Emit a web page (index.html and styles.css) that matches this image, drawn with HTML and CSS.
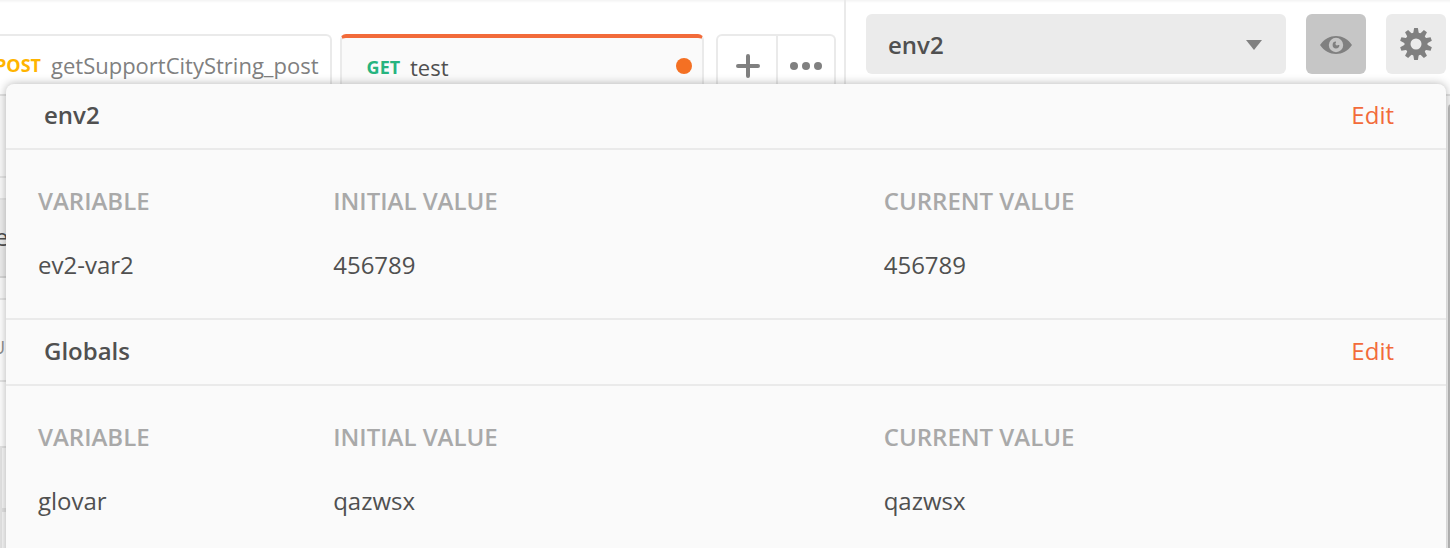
FILE: index.html
```
<!DOCTYPE html>
<html lang="en">
<head>
<meta charset="utf-8">
<title>Environment quick look</title>
<link rel="stylesheet" href="styles.css">
</head>
<body>
<div class="app">
  <header class="topbar">
    <div class="tabs">
      <div class="tab tab-post"><span class="method post">POST</span><span class="name">getSupportCityString_post</span></div>
      <div class="tab tab-active"><span class="method get">GET</span><span class="name">test</span><span class="unsaved"></span></div>
      <div class="tab-actions">
        <div class="action"><svg width="24" height="24" viewBox="0 0 24 24"><path d="M12 2v20M2 12h20" stroke="#808080" stroke-width="4" stroke-linecap="round"/></svg></div>
        <div class="action"><svg width="32" height="8" viewBox="0 0 32 8" fill="#808080"><circle cx="4" cy="4" r="4"/><circle cx="16" cy="4" r="4"/><circle cx="28" cy="4" r="4"/></svg></div>
      </div>
    </div>
    <div class="env-bar">
      <div class="select"><span>env2</span><svg width="16" height="10" viewBox="0 0 16 10"><path d="M0 0h16L8 10z" fill="#808080"/></svg></div>
      <div class="button pressed"><svg width="32" height="18" viewBox="0 0 32 18"><path d="M0 9C4 3 10 0 16 0s12 3 16 9c-4 6-10 9-16 9S4 15 0 9z" fill="#808080"/><circle cx="16" cy="9" r="7.2" fill="#c6c6c6"/><path d="M16 5.6A3.4 3.4 0 1 0 19.4 9H16z" fill="#808080"/><circle cx="17" cy="7.8" r="1.6" fill="#c6c6c6"/></svg></div>
      <div class="button"><svg width="32" height="32" viewBox="-16 -16 32 32"><g fill="#808080"><path id="tooth" d="M-2.9-10L-1.9-16H1.9L2.9-10V10L1.9 16H-1.9L-2.9 10z"/><use href="#tooth" transform="rotate(36)"/><use href="#tooth" transform="rotate(72)"/><use href="#tooth" transform="rotate(108)"/><use href="#tooth" transform="rotate(144)"/><circle r="11.5"/></g><circle r="5.5" fill="#ebebeb"/></svg></div>
    </div>
  </header>
  <main class="request">
    <div class="strip first"></div>
    <div class="strip gap"></div>
    <div class="strip url">e</div>
    <div class="strip gap"></div>
    <div class="strip params"><span>U</span></div>
    <div class="strip blank"></div>
    <div class="strip table"></div>
    <div class="strip table end"></div>
  </main>
  <div class="scrollbar"></div>
  <section class="popover">
    <div class="heading"><h2>env2</h2><a>Edit</a></div>
    <div class="grid">
      <div class="label">VARIABLE</div><div class="label">INITIAL VALUE</div><div class="label">CURRENT VALUE</div>
      <div>ev2-var2</div><div>456789</div><div>456789</div>
    </div>
    <div class="heading second"><h2>Globals</h2><a>Edit</a></div>
    <div class="grid">
      <div class="label">VARIABLE</div><div class="label">INITIAL VALUE</div><div class="label">CURRENT VALUE</div>
      <div>glovar</div><div>qazwsx</div><div>qazwsx</div>
    </div>
  </section>
</div>
</body>
</html>
```
FILE: styles.css
```
* { box-sizing: border-box; }
body { margin: 0; font-family: "Open Sans", sans-serif; color: #505050; }
svg { display: block; }
.app { position: relative; width: 1450px; height: 548px; overflow: hidden; background: #fafafa; font-size: 24px; }
.topbar { display: flex; height: 96px; background: linear-gradient(#f3f3f3, #fff 3px); border-bottom: 2px solid #e3e3e3; }
.tabs { display: flex; width: 846px; padding-top: 34px; border-right: 2px solid #eaeaea; }
.tab { display: flex; height: 60px; border: 2px solid #eaeaea; border-bottom: 0; border-radius: 6px 6px 0 0; white-space: nowrap; }
.tab-post { width: 342px; margin-left: -10px; margin-right: 8px; padding-left: 3px; }
.tab-active { width: 364px; margin-right: 12px; padding-left: 24.6px; border-top: 4px solid #f26b3a; background: #fafafa; }
.method { font-weight: 700; font-size: 18px; line-height: 24px; margin-top: 17px; }
.post { color: #ffb400; width: 46px; }
.get { color: #26b47f; width: 33.4px; }
.name { font-size: 22px; line-height: 30px; margin-top: 14px; margin-left: 10px; }
.tab-post .name { color: #808080; }
.unsaved { width: 16px; height: 16px; margin: 20px 10px 0 auto; border-radius: 50%; background: #f47023; }
.tab-actions { display: flex; width: 120px; height: 60px; border: 2px solid #eaeaea; border-bottom: 0; border-radius: 6px 6px 0 0; }
.action { display: flex; width: 58px; justify-content: center; height: 60px; align-items: center; }
.action:first-child { padding-left: 2px; }
.action + .action { border-left: 2px solid #eaeaea; }
.env-bar { display: flex; gap: 20px; padding: 14px 0 0 20px; }
.select, .button { display: flex; align-items: center; height: 60px; border-radius: 6px; background: #ebebeb; }
.select { width: 420px; justify-content: space-between; padding: 0 24px 0 22px; font-weight: 600; }
.select svg { margin-top: 2px; }
.button { width: 60px; justify-content: center; }
.pressed { background: #c6c6c6; }
.pressed svg { margin-top: 2px; }
.request { width: 30px; }
.strip { border-bottom: 2px solid #e6e6e6; overflow: hidden; }
.first { height: 82px; }
.gap { height: 22px; }
.url { height: 78px; background: #eee; border-color: #d8d8d8; line-height: 74px; text-indent: -5px; }
.params { height: 82px; background: #fff; color: #909090; }
.params span { display: block; margin: 32px 0 0 -8px; font-size: 18px; line-height: 30px; }
.blank { height: 66px; background: #fff; }
.table { height: 64px; border-left: 2px solid #e6e6e6; border-bottom-width: 4px; background: #fafafa; }
.scrollbar { position: absolute; left: 1448px; top: 104px; width: 8px; height: 460px; border-radius: 4px; background: #bdbdbd; }
.popover { position: absolute; left: 6px; top: 84px; width: 1440px; height: 490px; border-radius: 8px 8px 0 0; background: #fafafa; box-shadow: 0 0 10px rgba(0,0,0,.3); }
.heading { display: flex; justify-content: space-between; align-items: center; height: 66px; padding: 0 52px 4px 38px; border-bottom: 2px solid #eaeaea; }
.heading h2 { margin: 0; font-size: 24px; font-weight: 600; }
.heading a { color: #f26b3a; }
.second { height: 68px; border-top: 2px solid #eaeaea; }
.grid { display: grid; grid-template-columns: 295.2px 550.5px 1fr; grid-template-rows: 64px 64px; height: 168px; padding: 19px 0 0 32px; line-height: 64px; }
.label { font-weight: 600; color: #a9a9a9; }
```
